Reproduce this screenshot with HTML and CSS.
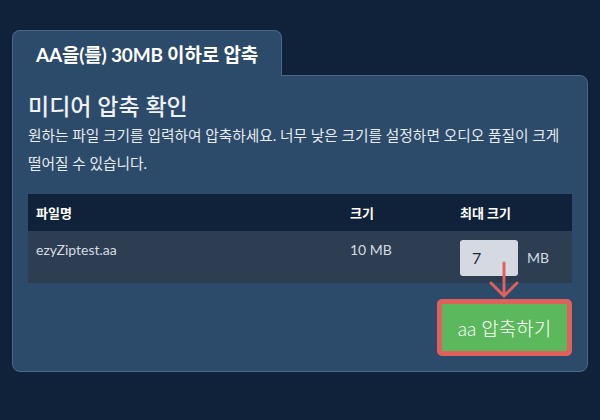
FILE: index.html
```html
<!DOCTYPE html>
<html lang="ko">
<head>
<meta charset="utf-8">
<link rel="stylesheet" href="styles.css">
</head>
<body>
<div class="wrap">
  <div class="tab">AA을(를) 30MB 이하로 압축</div>
  <div class="panel">
    <h2 class="title">미디어 압축 확인</h2>
    <p class="desc">원하는 파일 크기를 입력하여 압축하세요. 너무 낮은 크기를 설정하면 오디오 품질이 크게 떨어질 수 있습니다.</p>
    <table class="files">
      <thead>
        <tr><th class="c1">파일명</th><th class="c2">크기</th><th class="c3">최대 크기</th></tr>
      </thead>
      <tbody>
        <tr>
          <td class="c1">ezyZiptest.aa</td>
          <td class="c2">10 MB</td>
          <td class="c3">
            <div class="maxcell">
              <div class="field">
                <span class="num">7</span>
                <svg class="arrow" width="30" height="36" viewBox="0 0 30 36">
                  <path d="M15 0 V33 M2 20 L15 33 L28 20" fill="none" stroke="#e0605c" stroke-width="3" stroke-linecap="round" stroke-linejoin="round"/>
                </svg>
              </div>
              <span class="unit">MB</span>
            </div>
          </td>
        </tr>
      </tbody>
    </table>
    <div class="actions">
      <div class="btn-ring"><button class="btn">aa 압축하기</button></div>
    </div>
  </div>
</div>
</body>
</html>
```
FILE: styles.css
```css
html, body {
  margin: 0;
  padding: 0;
  background: #10223a;
  font-family: Lato, "Noto Sans CJK KR", sans-serif;
  color: #ffffff;
}
.wrap {
  padding: 30px 12px 0 12px;
}
.tab {
  display: inline-block;
  position: relative;
  z-index: 2;
  height: 46px;
  line-height: 48px;
  padding: 0 0 0 23px;
  background: #2c4a6a;
  border: 1px solid #4b6889;
  border-bottom: none;
  border-radius: 8px 8px 0 0;
  font-size: 19px;
  font-weight: 700;
  margin-bottom: -1px;
  box-sizing: border-box;
  width: 270px;
  letter-spacing: -0.2px;
}
.panel {
  position: relative;
  z-index: 1;
  background: #2c4a6a;
  border: 1px solid #4b6889;
  border-radius: 0 8px 8px 8px;
  padding: 15px 15px 15px 15px;
}
.title {
  margin: 0;
  font-size: 23px;
  line-height: 30px;
  font-weight: 500;
  color: #eef1f5;
}
.desc {
  margin: 0;
  font-size: 14.7px;
  line-height: 28px;
  color: #e8ecf1;
  word-break: keep-all;
}
.files {
  margin-top: 17px;
  width: 100%;
  border-collapse: collapse;
  font-size: 14px;
}
.files th {
  background: #10223a;
  text-align: left;
  height: 37px;
  padding: 0 8px;
  font-weight: 700;
  font-size: 13px;
  color: #ffffff;
}
.files td {
  background: #2d3e53;
  vertical-align: top;
  padding: 9px 8px 7px 8px;
  color: #d6dbe2;
  line-height: 20px;
}
.c1 { width: 298px; }
.c2 { width: 94px; }
.maxcell {
  display: flex;
  align-items: center;
  gap: 9px;
}
.field {
  position: relative;
  width: 58px;
  height: 36px;
  background: #d5dae2;
  border-radius: 3px;
  box-sizing: border-box;
  padding-left: 12px;
  display: flex;
  align-items: center;
}
.num {
  font-size: 16px;
  color: #1f2733;
}
.arrow {
  position: absolute;
  left: 29px;
  top: 23px;
  overflow: visible;
}
.unit {
  font-size: 14px;
  color: #d6dbe2;
}
.actions {
  display: flex;
  justify-content: flex-end;
  margin-top: 16px;
}
.btn-ring {
  border: 5px solid #e0605c;
  border-radius: 5px;
  background: #e0605c;
}
.btn {
  display: block;
  width: 125px;
  height: 47px;
  border: none;
  border-radius: 1px;
  background: #5cb85c;
  color: #ffffff;
  font-family: Lato, "Noto Sans CJK KR", sans-serif;
  font-size: 19px;
  font-weight: 300;
  padding: 0;
}
```
